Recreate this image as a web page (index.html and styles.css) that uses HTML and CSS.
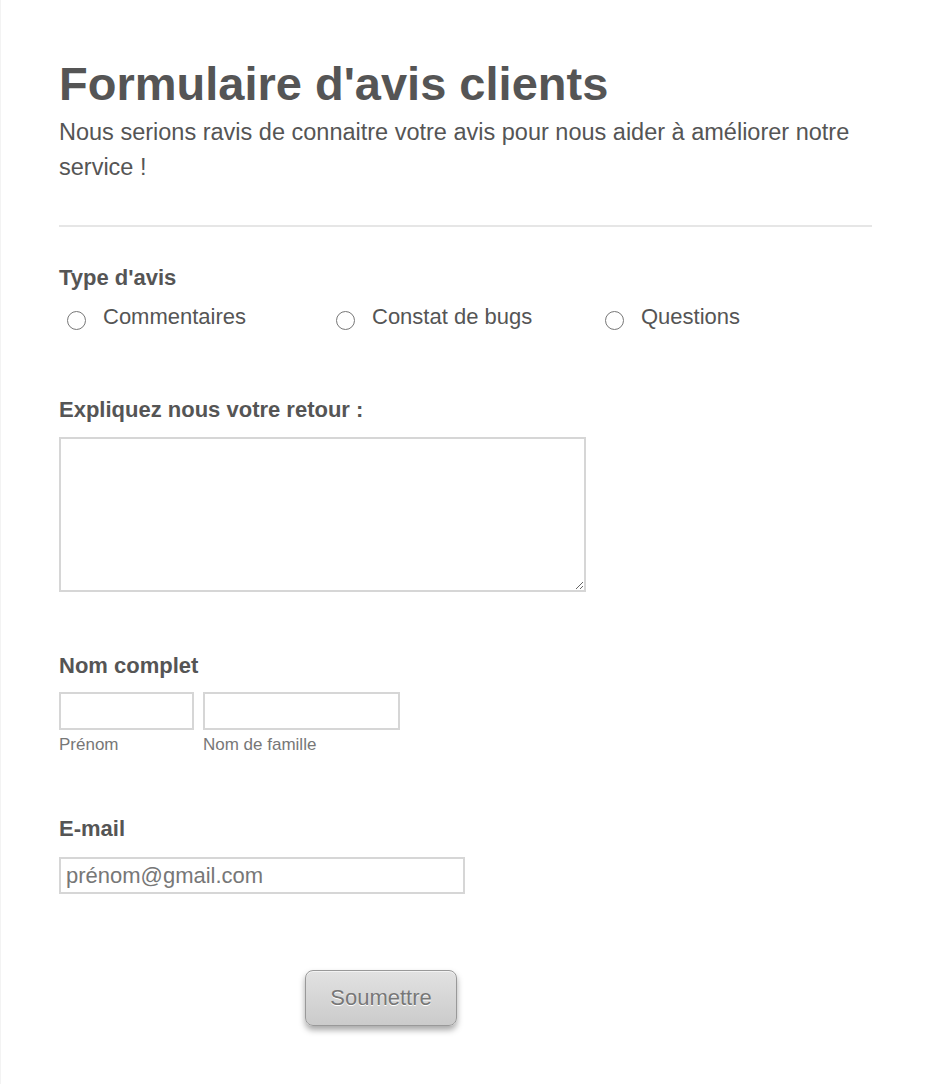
FILE: index.html
```html
<!DOCTYPE html>
<html>
<head>
    <title>Formulaire d'avis clients</title>
    <meta charset="UTF-8">
    <meta name="viewport" content="width=device-width, initial-scale=1.0">
    <link rel="stylesheet" href="styles.css">
</head>
<body>
    <div class="page">
        <form class="form">
            <div class="header">
                <h1>Formulaire d'avis clients</h1>
                <p class="subtitle">Nous serions ravis de connaitre votre avis pour nous aider à améliorer notre service !</p>
            </div>

            <div class="field field-type">
                <div class="label">Type d'avis</div>
                <div class="radios">
                    <label class="radio"><input type="radio" name="type"><span>Commentaires</span></label>
                    <label class="radio"><input type="radio" name="type"><span>Constat de bugs</span></label>
                    <label class="radio"><input type="radio" name="type"><span>Questions</span></label>
                </div>
            </div>

            <div class="field field-text">
                <div class="label">Expliquez nous votre retour :</div>
                <textarea class="textarea"></textarea>
            </div>

            <div class="field field-name">
                <div class="label">Nom complet</div>
                <div class="name-row">
                    <div class="name-part first">
                        <input type="text" class="input">
                        <span class="sublabel">Prénom</span>
                    </div>
                    <div class="name-part last">
                        <input type="text" class="input">
                        <span class="sublabel">Nom de famille</span>
                    </div>
                </div>
            </div>

            <div class="field field-email">
                <div class="label">E-mail</div>
                <input type="email" class="input email" placeholder="prénom@gmail.com">
            </div>

            <div class="actions">
                <button type="button" class="submit">Soumettre</button>
            </div>
        </form>
    </div>
</body>
</html>
```

FILE: styles.css
```css
body {
    margin: 0;
    background-color: #fff;
    font-family: 'Liberation Sans', Arial, sans-serif;
    color: #555;
}
.page {
    border-left: 1px solid #f3f3f3;
    min-height: 1084px;
    box-sizing: border-box;
}
.form {
    width: 813px;
    margin-left: 58px;
    padding-top: 56px;
}
.header {
    border-bottom: 2px solid #e6e6e6;
    padding-bottom: 40px;
}
h1 {
    margin: 0;
    font-size: 47px;
    line-height: 56px;
    font-weight: bold;
    color: #555;
}
.subtitle {
    margin: 0;
    padding-top: 3px;
    font-size: 23.5px;
    line-height: 35px;
    color: #555;
}
.field {
    margin-top: 37px;
}
.label {
    font-size: 22px;
    font-weight: bold;
    line-height: 28px;
    color: #555;
}
.radios {
    display: flex;
    margin-top: 12px;
}
.radio {
    display: flex;
    align-items: center;
    width: 269px;
    font-size: 22px;
    color: #555;
}
.radio input {
    margin: 6px 17px 0 8px;
    width: 19px;
    height: 19px;
    appearance: none;
    border: 1.5px solid #777;
    border-radius: 50%;
    box-sizing: border-box;
}
.field-text {
    margin-top: 66px;
}
.textarea {
    display: block;
    margin-top: 13px;
    width: 527px;
    height: 155px;
    border: 2px solid #d6d6d6;
    box-sizing: border-box;
    resize: both;
}
.field-name {
    margin-top: 60px;
}
.name-row {
    display: flex;
    gap: 9px;
    margin-top: 12px;
}
.name-part {
    display: flex;
    flex-direction: column;
}
.input {
    height: 38px;
    border: 2px solid #d6d6d6;
    box-sizing: border-box;
    font-family: inherit;
    font-size: 22px;
    padding: 0 5px;
    color: #555;
}
.first .input {
    width: 135px;
}
.last .input {
    width: 197px;
}
.sublabel {
    font-size: 17px;
    color: #777;
    margin-top: 5px;
}
.field-email {
    margin-top: 60px;
}
.email {
    display: block;
    margin-top: 14px;
    width: 406px;
    height: 37px;
}
.email::placeholder {
    color: #777;
}
.actions {
    margin-top: 76px;
    padding-left: 246px;
}
.submit {
    width: 152px;
    height: 56px;
    border: 1px solid #999;
    border-radius: 8px;
    background: linear-gradient(to bottom, #e2e2e2 0%, #d6d6d6 50%, #cbcbcb 100%);
    box-shadow: 0 4px 6px rgba(0, 0, 0, 0.35), inset 0 1px 0 rgba(255, 255, 255, 0.6);
    font-family: inherit;
    font-size: 22px;
    color: #777;
    text-shadow: 0 1px 0 #fff;
}
```
